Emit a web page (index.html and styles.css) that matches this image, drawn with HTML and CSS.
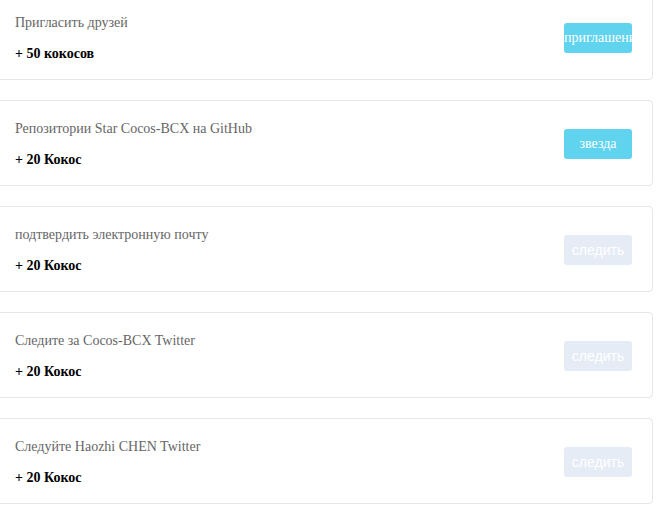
FILE: index.html
```html
<!DOCTYPE html>
<html lang="ru">
<head>
<meta charset="utf-8">
<title>Задания</title>
<link rel="stylesheet" href="styles.css">
</head>
<body>
<ul class="task-list">
  <li class="task">
    <div class="task-info">
      <div class="task-title">Пригласить друзей</div>
      <div class="task-reward">+ 50 кокосов</div>
    </div>
    <button class="task-btn">приглашение</button>
  </li>
  <li class="task">
    <div class="task-info">
      <div class="task-title">Репозитории Star Cocos-BCX на GitHub</div>
      <div class="task-reward">+ 20 Кокос</div>
    </div>
    <button class="task-btn">звезда</button>
  </li>
  <li class="task">
    <div class="task-info">
      <div class="task-title">подтвердить электронную почту</div>
      <div class="task-reward">+ 20 Кокос</div>
    </div>
    <button class="task-btn is-disabled" disabled>следить</button>
  </li>
  <li class="task">
    <div class="task-info">
      <div class="task-title">Следите за Cocos-BCX Twitter</div>
      <div class="task-reward">+ 20 Кокос</div>
    </div>
    <button class="task-btn is-disabled" disabled>следить</button>
  </li>
  <li class="task">
    <div class="task-info">
      <div class="task-title">Следуйте Haozhi CHEN Twitter</div>
      <div class="task-reward">+ 20 Кокос</div>
    </div>
    <button class="task-btn is-disabled" disabled>следить</button>
  </li>
</ul>
</body>
</html>
```
FILE: styles.css
```css
html, body {
  margin: 0;
  padding: 0;
  background: #ffffff;
  overflow: hidden;
}

body {
  font-family: "Liberation Serif", "Times New Roman", serif;
  font-size: 14px;
}

.task-list {
  list-style: none;
  margin: -6px 0 0 -4px;
  padding: 0;
  width: 657px;
  display: flex;
  flex-direction: column;
  gap: 20px;
}

.task {
  box-sizing: border-box;
  height: 86px;
  border: 1px solid #e6e6e6;
  border-radius: 4px;
  padding: 18px 20px 15px 18px;
  display: flex;
  align-items: center;
  justify-content: space-between;
}

.task-info {
  display: flex;
  flex-direction: column;
  gap: 11px;
}

.task-title {
  line-height: 20px;
  color: #666666;
}

.task-reward {
  line-height: 20px;
  font-weight: bold;
  color: #000000;
}

.task-btn {
  width: 68px;
  height: 30px;
  margin-top: -2px;
  padding: 0;
  border: none;
  border-radius: 3px;
  background: #60d3ef;
  color: #ffffff;
  font-family: "Liberation Serif", "Times New Roman", serif;
  font-size: 14px;
  text-align: center;
  white-space: nowrap;
  overflow: hidden;
  cursor: pointer;
}

.task-btn.is-disabled {
  background: #e6ecf6;
  color: #ffffff;
  font-family: "Liberation Sans", Arial, sans-serif;
  cursor: not-allowed;
}
```
